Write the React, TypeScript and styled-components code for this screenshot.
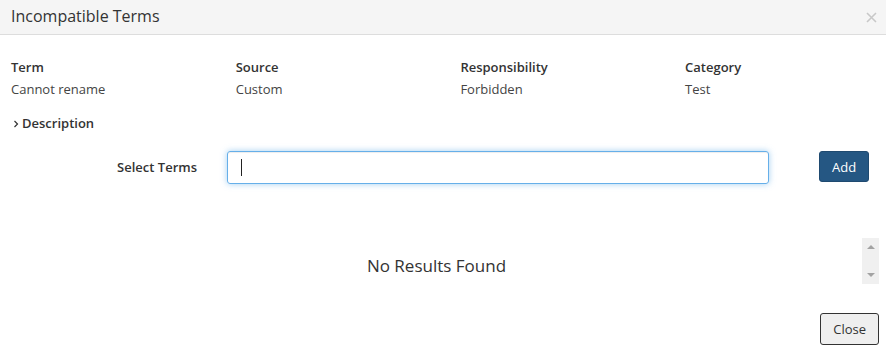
import styled, { createGlobalStyle } from "styled-components";

const GlobalStyle = createGlobalStyle`
  html, body {
    margin: 0;
    padding: 0;
    background: #ffffff;
  }
  body {
    font-family: "Open Sans", "Liberation Sans", sans-serif;
    color: #333333;
  }
`;

const Modal = styled.div`
  width: 886px;
  height: 356px;
  display: flex;
  flex-direction: column;
  background: #ffffff;
`;

const ModalHeader = styled.div`
  height: 35px;
  box-sizing: border-box;
  display: flex;
  align-items: center;
  justify-content: space-between;
  padding: 0 8px 0 11px;
  background: #f5f5f5;
  border-bottom: 1px solid #dddddd;
`;

const ModalTitle = styled.div`
  font-size: 16px;
  color: #333333;
  padding-bottom: 3px;
`;

const CloseX = styled.button`
  border: none;
  background: none;
  padding: 0;
  margin-top: 2px;
  width: 12px;
  height: 12px;
  display: flex;
  cursor: pointer;
`;

const ModalBody = styled.div`
  flex: 1;
  display: flex;
  flex-direction: column;
  padding: 23px 7px 0 11px;
`;

const InfoGrid = styled.div`
  display: grid;
  grid-template-columns: repeat(4, 224.7px);
  row-gap: 3px;
  font-size: 13px;
  line-height: 19px;
`;

const InfoLabel = styled.div`
  font-weight: 600;
  color: #333333;
`;

const InfoValue = styled.div`
  color: #444444;
`;

const Toggle = styled.div`
  display: flex;
  align-items: center;
  gap: 3px;
  margin-top: 15px;
  margin-left: 2px;
  font-size: 13px;
  font-weight: 600;
  line-height: 19px;
  color: #333333;
`;

const SearchRow = styled.div`
  display: flex;
  align-items: flex-start;
  margin-top: 18px;
`;

const SearchLabel = styled.label`
  width: 186px;
  height: 33px;
  display: flex;
  align-items: center;
  justify-content: flex-end;
  font-size: 13px;
  font-weight: 600;
  color: #333333;
  padding-bottom: 2px;
  box-sizing: border-box;
`;

const SearchInput = styled.div`
  margin-left: 30px;
  width: 542px;
  height: 33px;
  box-sizing: border-box;
  border: 1px solid #66afe9;
  border-radius: 3px;
  box-shadow: inset 0 1px 1px rgba(0, 0, 0, 0.075), 0 0 6px rgba(102, 175, 233, 0.6);
  display: flex;
  align-items: center;
  padding-left: 13px;
`;

const Caret = styled.span`
  width: 1px;
  height: 17px;
  background: #222222;
`;

const Button = styled.button<{ $primary?: boolean }>`
  font-family: "Open Sans", "Liberation Sans", sans-serif;
  font-size: 13px;
  height: ${(p) => (p.$primary ? "31px" : "32px")};
  padding: 0 12px;
  border-radius: 3px;
  cursor: pointer;
  color: ${(p) => (p.$primary ? "#ffffff" : "#333333")};
  background: ${(p) => (p.$primary ? "#255783" : "#efefef")};
  border: 1px solid ${(p) => (p.$primary ? "#1f4a70" : "#333333")};
`;

const AddButton = styled(Button)`
  margin-left: 50px;
`;

const ResultsArea = styled.div`
  display: flex;
  align-items: center;
  margin-top: 54px;
  height: 46px;
`;

const EmptyText = styled.div`
  flex: 1;
  text-align: center;
  font-size: 17px;
  color: #333333;
  padding-top: 9px;
`;

const ScrollTrack = styled.div`
  width: 17px;
  height: 46px;
  background: #f0f0f0;
  display: flex;
  flex-direction: column;
  justify-content: space-between;
  align-items: center;
  padding: 7px 0;
  box-sizing: border-box;
`;

const Arrow = styled.span<{ $down?: boolean }>`
  width: 0;
  height: 0;
  border-left: 4px solid transparent;
  border-right: 4px solid transparent;
  ${(p) =>
    p.$down
      ? "border-top: 4px solid #a3a3a3;"
      : "border-bottom: 4px solid #a3a3a3;"}
`;

const Footer = styled.div`
  display: flex;
  justify-content: flex-end;
  margin-top: 29px;
`;

const info = [
  { label: "Term", value: "Cannot rename" },
  { label: "Source", value: "Custom" },
  { label: "Responsibility", value: "Forbidden" },
  { label: "Category", value: "Test" },
];

export default function App() {
  return (
    <>
      <GlobalStyle />
      <Modal>
        <ModalHeader>
          <ModalTitle>Incompatible Terms</ModalTitle>
          <CloseX aria-label="Close">
            <svg width="11" height="11" viewBox="0 0 11 11">
              <path d="M1 1L10 10M10 1L1 10" stroke="#c8c8c8" strokeWidth="1.6" />
            </svg>
          </CloseX>
        </ModalHeader>
        <ModalBody>
          <InfoGrid>
            {info.map((i) => (
              <InfoLabel key={i.label}>{i.label}</InfoLabel>
            ))}
            {info.map((i) => (
              <InfoValue key={i.label}>{i.value}</InfoValue>
            ))}
          </InfoGrid>
          <Toggle>
            <svg width="6" height="8" viewBox="0 0 6 8">
              <path d="M1.5 1L4.5 4L1.5 7" stroke="#333" strokeWidth="1.2" fill="none" />
            </svg>
            Description
          </Toggle>
          <SearchRow>
            <SearchLabel>Select Terms</SearchLabel>
            <SearchInput>
              <Caret />
            </SearchInput>
            <AddButton $primary>Add</AddButton>
          </SearchRow>
          <ResultsArea>
            <EmptyText>No Results Found</EmptyText>
            <ScrollTrack>
              <Arrow />
              <Arrow $down />
            </ScrollTrack>
          </ResultsArea>
          <Footer>
            <Button>Close</Button>
          </Footer>
        </ModalBody>
      </Modal>
    </>
  );
}
